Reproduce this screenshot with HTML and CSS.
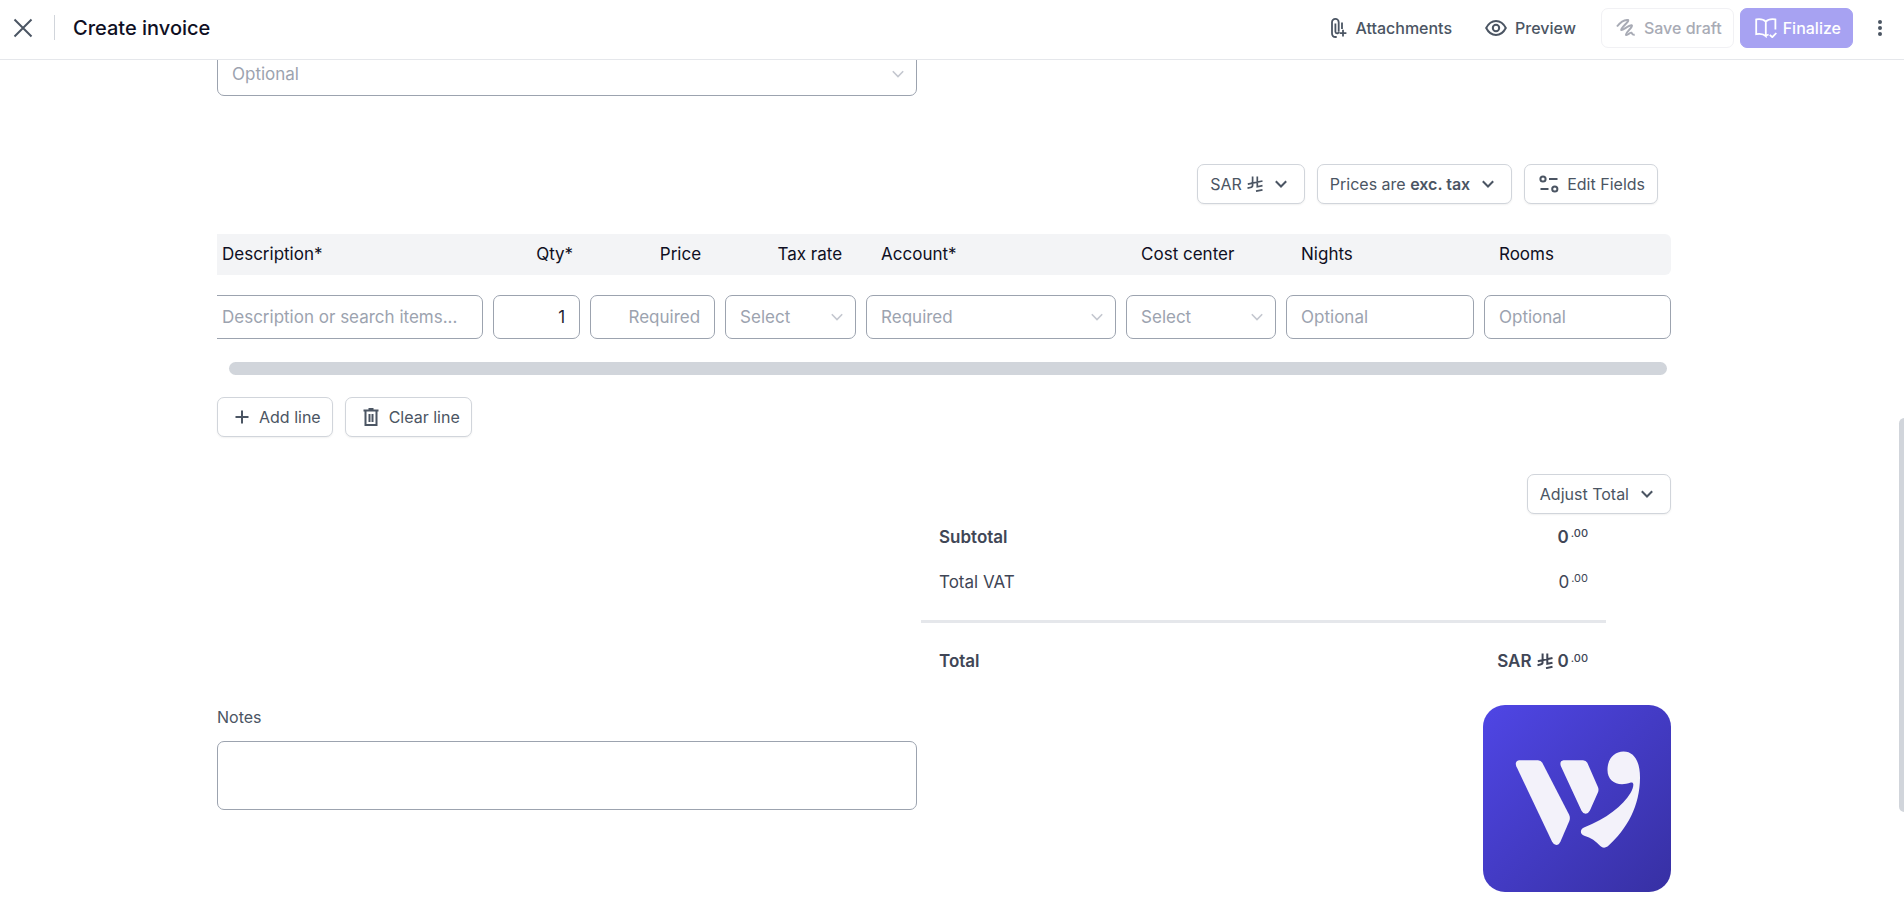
FILE: index.html
```html
<!DOCTYPE html>
<html lang="en">
<head>
<meta charset="utf-8">
<meta name="viewport" content="width=device-width, initial-scale=1">
<title>Create invoice</title>
<link rel="stylesheet" href="styles.css">
</head>
<body>
<svg class="defs" aria-hidden="true">
  <symbol id="chevron" viewBox="0 0 12 8"><path d="M.8 1.2L6 6.500l5.200-5.300"/></symbol>
  <symbol id="riyal" viewBox="0 0 16 16">
    <path d="M5.600 .5v8.700c0 1.400-.8 2-2.200 2.300l-2.900.7M10.300 .5v10.300l5.200-1.100M.8 8.200l14.700-3.200M9 15.200l6.500-1.400"/>
  </symbol>
</svg>

<header class="topbar">
  <button class="icon-btn" type="button" aria-label="Close">
    <svg class="icon-close" viewBox="0 0 20 20"><path d="M1.500 1.500l17 17M18.500 1.500l-17 17"/></svg>
  </button>
  <span class="divider"></span>
  <h1 class="title">Create invoice</h1>
  <div class="actions">
    <button class="link-btn" type="button">
      <svg class="icon-clip" viewBox="0 0 16 20"><path d="M7.700 13.500V4.300a3.300 3.300 0 0 0-6.700 0v10.900c0 2.400 1.700 3.800 3.700 3.800h1M4.400 5.500v8.300c0 2 3.300 2 3.300 0M11 4.500v6.500M12 11.800v6.700M8.600 15.200h6.800"/></svg>
      <span>Attachments</span>
    </button>
    <button class="link-btn" type="button">
      <svg class="icon-eye" viewBox="0 0 22 16"><path d="M1.200 8C3.500 3.500 7 1 11 1s7.500 2.500 9.800 7C18.500 12.500 15 15 11 15S3.500 12.500 1.200 8z"/><circle cx="11" cy="8" r="3.200"/></svg>
      <span>Preview</span>
    </button>
    <div class="pair">
      <button class="btn btn-muted" type="button" disabled>
        <svg class="icon-draft" viewBox="0 0 20 20"><path d="M1 8.500C4.500 4 9 1.500 12 2 14 3 4 10.500 5.200 12 6.500 13 13 6.500 15.800 7.300 17.500 8.500 8.800 15.500 10 17c1.500 1 4.200-3 5.500-2.300.9.700.3 2.400 3.200 2"/></svg>
        <span>Save draft</span>
      </button>
      <button class="btn btn-primary" type="button" disabled>
        <svg class="icon-book" viewBox="0 0 22 20"><path d="M10.800 3.600C8.500 1.200 5 .8 1.200 1.400v14.800c3.800-.6 7.300-.4 9.600 2V3.600zM10.800 3.600c2.300-2.400 5.800-2.800 9.600-2.200v10M10.800 18.200c.9-.9 1.700-1.400 2.800-1.700M14.800 16.800l2.500 2.400 4-4.200"/></svg>
        <span>Finalize</span>
      </button>
    </div>
    <button class="icon-btn" type="button" aria-label="More options">
      <svg class="icon-dots" viewBox="0 0 4 16"><circle cx="2" cy="2" r="2"/><circle cx="2" cy="8" r="2"/><circle cx="2" cy="14" r="2"/></svg>
    </button>
  </div>
</header>

<main class="page">
  <div class="half-row first-field">
    <div class="select-wrap">
      <select class="field" aria-label="Optional field"><option>Optional</option></select>
      <svg class="chevron"><use href="#chevron"/></svg>
    </div>
  </div>

  <div class="toolbar">
    <button class="btn btn-menu" type="button"><span class="currency">SAR<svg class="riyal"><use href="#riyal"/></svg></span><svg class="caret"><use href="#chevron"/></svg></button>
    <button class="btn btn-menu" type="button"><span>Prices are <strong>exc. tax</strong></span><svg class="caret"><use href="#chevron"/></svg></button>
    <button class="btn btn-edit" type="button">
      <svg class="icon-fields" viewBox="0 0 20 18"><circle cx="4" cy="4" r="2.600"/><path d="M10 4h8.500M1.500 14h8"/><circle cx="15.800" cy="14" r="2.600"/></svg>
      <span>Edit Fields</span>
    </button>
  </div>

  <div class="lines">
    <table class="lines-table">
      <colgroup>
        <col class="c-desc"><col class="c-qty"><col class="c-price"><col class="c-tax"><col class="c-account"><col class="c-cost"><col class="c-nights"><col class="c-rooms">
      </colgroup>
      <thead>
        <tr>
          <th id="h-desc">Description*</th>
          <th id="h-qty" class="num">Qty*</th>
          <th id="h-price" class="num">Price</th>
          <th id="h-tax" class="num">Tax rate</th>
          <th id="h-account">Account*</th>
          <th id="h-cost">Cost center</th>
          <th id="h-nights">Nights</th>
          <th id="h-rooms">Rooms</th>
        </tr>
      </thead>
      <tbody>
        <tr>
          <td><input class="field" type="text" placeholder="Description or search items..." aria-labelledby="h-desc"></td>
          <td><input class="field field-qty" type="text" value="1" aria-labelledby="h-qty"></td>
          <td><input class="field field-num" type="text" placeholder="Required" aria-labelledby="h-price"></td>
          <td><div class="select-wrap"><select class="field" aria-labelledby="h-tax"><option>Select</option></select><svg class="chevron"><use href="#chevron"/></svg></div></td>
          <td><div class="select-wrap"><select class="field" aria-labelledby="h-account"><option>Required</option></select><svg class="chevron"><use href="#chevron"/></svg></div></td>
          <td><div class="select-wrap"><select class="field" aria-labelledby="h-cost"><option>Select</option></select><svg class="chevron"><use href="#chevron"/></svg></div></td>
          <td><input class="field" type="text" placeholder="Optional" aria-labelledby="h-nights"></td>
          <td><input class="field" type="text" placeholder="Optional" aria-labelledby="h-rooms"></td>
        </tr>
      </tbody>
    </table>
    <div class="h-scroll"></div>
  </div>

  <div class="line-actions">
    <button class="btn" type="button">
      <svg class="icon-plus" viewBox="0 0 14 14"><path d="M7 .5v13M.5 7h13"/></svg>
      <span>Add line</span>
    </button>
    <button class="btn" type="button">
      <svg class="icon-trash" viewBox="0 0 16 18"><path d="M.5 2.500h15M5.500 1h5M2.500 2.500v14.500h11V2.500M6.500 6v8M9.500 6v8"/></svg>
      <span>Clear line</span>
    </button>
  </div>

  <div class="adjust">
    <button class="btn btn-menu" type="button"><span>Adjust Total</span><svg class="caret"><use href="#chevron"/></svg></button>
  </div>

  <dl class="totals">
    <div class="total-row strong"><dt>Subtotal</dt><dd>0<sup>.00</sup></dd></div>
    <div class="total-row"><dt>Total VAT</dt><dd>0<sup>.00</sup></dd></div>
    <div class="total-row strong grand"><dt>Total</dt><dd><span class="currency">SAR<svg class="riyal"><use href="#riyal"/></svg>0</span><sup>.00</sup></dd></div>
  </dl>

  <div class="bottom">
    <div class="notes">
      <label for="notes">Notes</label>
      <textarea class="field" id="notes"></textarea>
    </div>
    <svg class="logo" viewBox="0 0 188 187" role="img" aria-label="Company logo">
      <defs><linearGradient id="logo-bg" x1="0" y1="0" x2="1" y2="1"><stop offset="0" stop-color="#4f46e5"/><stop offset="1" stop-color="#3730a3"/></linearGradient></defs>
      <rect width="188" height="187" rx="22" fill="url(#logo-bg)"/>
      <g fill="#f3f2fa">
        <path d="M36 55.300H55q3 0 4.300 2.500L86 109.500q1.600 3.300.3 6.500L77.500 136.500q-1.700 3.500-4.200 3.500t-4.200-3.200L33.300 61.300q-1.800-5 2.700-6z"/>
        <path d="M80.500 55.300H100q3 0 4.300 2.500L114.700 81.500q1.500 3 .2 6l-8 18q-1.600 3.200-4.200 3.200t-4.200-3L77.800 61q-1.500-5 2.700-5.700z"/>
        <path d="M140.500 46.500c11 0 16.500 10.500 16.500 26 0 28-13 52-32.500 69q-4 2.500-7.200-.5c-4.300-4.700-9.300-8.200-16-10.200-4.500-1.800-4.500-6.300-.3-8.300 22-8.500 39-22 46.500-34.500 2-3.500 3-6.500 2.800-8.800-.2-1.500-1-2-2.500-1.700-12.500 4.500-23.300-.5-23.300-12.500 0-11 6.500-18.500 16-18.500z"/>
      </g>
    </svg>
  </div>
  <div class="v-scroll"></div>
</main>
</body>
</html>
```
FILE: styles.css
```css
* { box-sizing: border-box; }

body {
  margin: 0;
  height: 100vh;
  display: flex;
  flex-direction: column;
  overflow: hidden;
  background: #fff;
  color: #4b5563;
  font: 400 16px/24px Inter, "Liberation Sans", sans-serif;
}

button, input, select, textarea { font: inherit; color: inherit; }
svg { flex: none; fill: none; stroke: currentColor; stroke-width: 2; }
.defs { position: absolute; width: 0; height: 0; }

/* Top bar */
.topbar {
  display: flex;
  align-items: center;
  flex: none;
  height: 60px;
  padding: 0 22px 4px 13px;
  border-bottom: 1px solid #e5e7eb;
}
.icon-btn { display: flex; padding: 0; border: 0; background: none; }
.icon-close { width: 20px; height: 20px; }
.divider { width: 1px; height: 25px; margin: 0 18px 0 21px; background: #d1d5db; }
.title { margin: 0; font-size: 20px; font-weight: 500; color: #0f0f23; }
.actions { display: flex; align-items: center; gap: 33px; margin-left: auto; }
.link-btn {
  display: flex;
  align-items: center;
  gap: 8px;
  padding: 0;
  border: 0;
  background: none;
  font-weight: 500;
}
.pair { display: flex; gap: 6px; margin: 0 -8px; }
.icon-clip { width: 16px; height: 20px; stroke-width: 1.800; }
.icon-eye { width: 22px; height: 16px; }
.icon-draft { width: 20px; height: 20px; }
.icon-book { width: 22px; height: 20px; stroke-width: 1.800; }
.icon-dots { width: 4px; height: 16px; fill: currentColor; stroke: none; }

/* Buttons */
.btn {
  display: flex;
  align-items: center;
  gap: 8px;
  height: 40px;
  padding: 0 12px;
  border: 1px solid #d1d5db;
  border-radius: 7px;
  background: #fff;
  box-shadow: 0 1px 2px rgb(0 0 0 / 6%);
  white-space: nowrap;
}
.btn strong { font-weight: 600; }
.btn-menu { gap: 12px; padding: 0 17px 0 12px; }
.btn-edit { padding-left: 14px; }
.btn-muted,
.btn-primary { padding: 0 11px 0 14px; box-shadow: none; font-weight: 500; }
.btn-muted { border-color: #f1f1f4; color: #a8abb5; }
.btn-primary { border-color: #a7a2f2; background: #a7a2f2; color: #fff; gap: 6px; }
.caret { width: 12px; height: 8px; }
.currency { display: flex; align-items: center; gap: 5px; }
.riyal { width: 16px; height: 16px; stroke-width: 1.700; }

/* Fields */
.field {
  display: block;
  width: 100%;
  height: 44px;
  margin: 0;
  padding: 0 14px;
  border: 1px solid #9ca3af;
  border-radius: 7px;
  background: #fff;
  font-size: 17px;
  appearance: none;
  outline: 0;
}
.field::placeholder { color: #9ca3af; opacity: 1; }
select.field { color: #9ca3af; }
.field-num { text-align: right; }
.field-qty { text-align: right; color: #1f2333; }
.select-wrap { display: grid; align-items: center; }
.select-wrap > * { grid-area: 1 / 1; }
.chevron {
  justify-self: end;
  width: 12px;
  height: 8px;
  margin-right: 13px;
  color: #c4c7cf;
  stroke-width: 1.600;
  pointer-events: none;
}

/* Page */
.page {
  position: relative;
  flex: 1;
  min-height: 0;
  overflow: hidden;
  padding: 0 233px 0 217px;
}
.half-row { width: calc(50% - 27px); }
.first-field { margin-top: -8px; }
.toolbar {
  display: flex;
  justify-content: flex-end;
  gap: 12px;
  margin: 68px 13px 0 0;
}

/* Invoice lines */
.lines { margin-top: 30px; overflow: hidden; }
.lines-table {
  width: calc(100% + 10px);
  margin-left: -10px;
  table-layout: fixed;
  border-collapse: separate;
  border-spacing: 0;
  color: #0f0f23;
}
.c-desc { width: 19.540%; }
.c-qty { width: 6.630%; }
.c-price { width: 9.220%; }
.c-tax { width: 9.630%; }
.c-account { width: 17.760%; }
.c-cost { width: 10.930%; }
.c-nights { width: 13.520%; }
.c-rooms { width: 12.770%; }
.lines-table th {
  height: 41px;
  padding: 0 15px 2px;
  background: #f3f4f6;
  font-size: 17px;
  font-weight: 400;
  text-align: left;
}
.lines-table th.num { padding-right: 24px; padding-left: 0; text-align: right; }
.lines-table th:nth-child(2) { padding-right: 17px; }
.lines-table th:last-child { border-radius: 0 6px 6px 0; }
.lines-table td { padding: 20px 10px 0 0; }
.lines-table td:last-child { padding-right: 0; }
.h-scroll { height: 13px; margin: 23px 4px 0 12px; border-radius: 7px; background: #d1d5db; }

.line-actions { display: flex; gap: 12px; margin-top: 22px; }
.line-actions .btn { gap: 10px; padding: 0 11px 0 17px; }
.icon-plus { width: 14px; height: 14px; }
.icon-trash { width: 16px; height: 18px; }
.icon-fields { width: 20px; height: 18px; }

/* Totals */
.adjust { display: flex; justify-content: flex-end; margin-top: 37px; }
.totals {
  width: calc(50% - 42px);
  margin: 0 65px 0 auto;
  color: #404656;
  font-size: 17px;
}
.total-row { display: flex; justify-content: space-between; height: 45px; padding: 0 18px; align-items: center; }
.total-row dd { display: flex; align-items: center; gap: 2px; margin: 0; }
.total-row sup { font-size: 11px; line-height: 12px; margin-bottom: 7px; }
.strong { font-weight: 600; }
.strong sup { font-weight: 500; }
.strong .riyal { stroke-width: 2; }
.grand { height: auto; margin-top: 16px; padding-top: 26px; border-top: 3px solid #e5e7eb; }

/* Notes and logo */
.bottom { display: flex; justify-content: space-between; align-items: flex-start; margin-top: 32px; }
.notes { width: calc(50% - 27px); }
.notes label { display: block; }
.notes .field { height: 69px; margin-top: 12px; resize: none; }
.logo { width: 188px; height: 187px; stroke: none; }

/* Scroll thumb at the window edge */
.v-scroll {
  position: absolute;
  top: 42.300%;
  right: -6px;
  width: 11px;
  height: 46.600%;
  border-radius: 6px;
  background: #d1d5db;
}
```
